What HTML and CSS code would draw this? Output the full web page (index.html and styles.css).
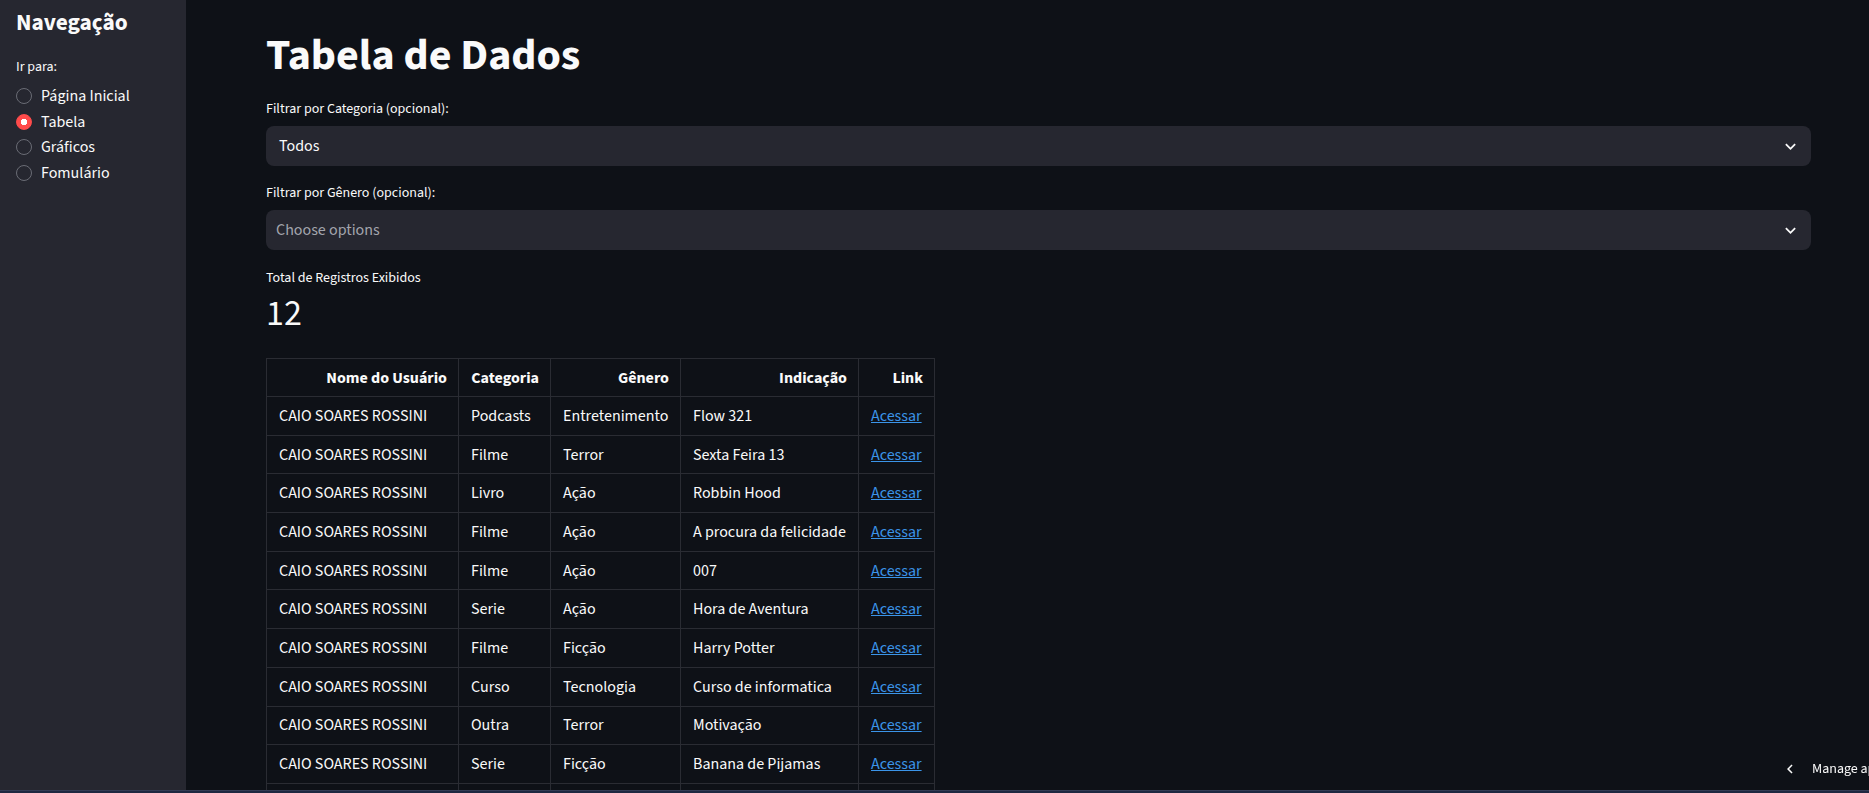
FILE: index.html
```html
<!DOCTYPE html>
<html lang="pt-BR">
<head>
<meta charset="utf-8">
<title>Tabela de Dados</title>
<link rel="stylesheet" href="styles.css">
</head>
<body>
<div class="app">
  <aside class="sidebar">
    <h2 class="side-title">Navegação</h2>
    <div class="side-label">Ir para:</div>
    <div class="radio-group">
      <label class="radio"><span class="dot"></span><span>Página Inicial</span></label>
      <label class="radio checked"><span class="dot"></span><span>Tabela</span></label>
      <label class="radio"><span class="dot"></span><span>Gráficos</span></label>
      <label class="radio"><span class="dot"></span><span>Fomulário</span></label>
    </div>
  </aside>
  <main class="main">
    <h1 class="title">Tabela de Dados</h1>

    <div class="field-label">Filtrar por Categoria (opcional):</div>
    <div class="select">
      <span class="select-value">Todos</span>
      <svg class="chev" viewBox="0 0 24 24" width="21" height="21"><path d="M16.59 8.59L12 13.17 7.41 8.59 6 10l6 6 6-6z" fill="#fafafa"/></svg>
    </div>

    <div class="field-label">Filtrar por Gênero (opcional):</div>
    <div class="select">
      <span class="select-placeholder">Choose options</span>
      <svg class="chev" viewBox="0 0 24 24" width="21" height="21"><path d="M16.59 8.59L12 13.17 7.41 8.59 6 10l6 6 6-6z" fill="#fafafa"/></svg>
    </div>

    <div class="metric">
      <div class="metric-label">Total de Registros Exibidos</div>
      <div class="metric-value">12</div>
    </div>

    <table class="data">
      <colgroup>
        <col class="c1"><col class="c2"><col class="c3"><col class="c4"><col class="c5">
      </colgroup>
      <thead>
        <tr><th>Nome do Usuário</th><th>Categoria</th><th>Gênero</th><th>Indicação</th><th>Link</th></tr>
      </thead>
      <tbody>
        <tr><td>CAIO SOARES ROSSINI</td><td>Podcasts</td><td>Entretenimento</td><td>Flow 321</td><td><a href="#">Acessar</a></td></tr>
        <tr><td>CAIO SOARES ROSSINI</td><td>Filme</td><td>Terror</td><td>Sexta Feira 13</td><td><a href="#">Acessar</a></td></tr>
        <tr><td>CAIO SOARES ROSSINI</td><td>Livro</td><td>Ação</td><td>Robbin Hood</td><td><a href="#">Acessar</a></td></tr>
        <tr><td>CAIO SOARES ROSSINI</td><td>Filme</td><td>Ação</td><td>A procura da felicidade</td><td><a href="#">Acessar</a></td></tr>
        <tr><td>CAIO SOARES ROSSINI</td><td>Filme</td><td>Ação</td><td>007</td><td><a href="#">Acessar</a></td></tr>
        <tr><td>CAIO SOARES ROSSINI</td><td>Serie</td><td>Ação</td><td>Hora de Aventura</td><td><a href="#">Acessar</a></td></tr>
        <tr><td>CAIO SOARES ROSSINI</td><td>Filme</td><td>Ficção</td><td>Harry Potter</td><td><a href="#">Acessar</a></td></tr>
        <tr><td>CAIO SOARES ROSSINI</td><td>Curso</td><td>Tecnologia</td><td>Curso de informatica</td><td><a href="#">Acessar</a></td></tr>
        <tr><td>CAIO SOARES ROSSINI</td><td>Outra</td><td>Terror</td><td>Motivação</td><td><a href="#">Acessar</a></td></tr>
        <tr><td>CAIO SOARES ROSSINI</td><td>Serie</td><td>Ficção</td><td>Banana de Pijamas</td><td><a href="#">Acessar</a></td></tr>
        <tr><td>CAIO SOARES ROSSINI</td><td>Livro</td><td>Ficção</td><td>Harry Potter</td><td><a href="#">Acessar</a></td></tr>
        <tr><td>CAIO SOARES ROSSINI</td><td>Filme</td><td>Terror</td><td>Invocação do Mal</td><td><a href="#">Acessar</a></td></tr>
      </tbody>
    </table>
  </main>
</div>
<div class="manage">
  <svg class="manage-chev" viewBox="0 0 24 24" width="18" height="18"><path d="M15.41 7.41L14 6l-6 6 6 6 1.41-1.41L10.83 12z" fill="#fafafa"/></svg>
  <span>Manage app</span>
</div>
<div class="bottom-bar"></div>
</body>
</html>
```
FILE: styles.css
```css
html, body {
  margin: 0;
  padding: 0;
  background: #0e1117;
  color: #fafafa;
  font-family: "Source Sans 3", "Source Sans Pro", Lato, "Noto Sans", sans-serif;
  overflow: hidden;
}
.app {
  display: flex;
  min-height: 100vh;
}
.sidebar {
  width: 186px;
  flex: none;
  background: #262730;
  padding: 7px 16px 0 16px;
  box-sizing: border-box;
  min-height: 100vh;
}
.side-title {
  margin: 0;
  font-size: 23.3px;
  line-height: 32px;
  font-weight: 700;
}
.side-label {
  margin-top: 18px;
  font-size: 14px;
  line-height: 20px;
}
.radio-group {
  margin-top: 6px;
  display: flex;
  flex-direction: column;
}
.radio {
  display: flex;
  align-items: center;
  gap: 9px;
  height: 25.7px;
  font-size: 16px;
}
.dot {
  width: 16px;
  height: 16px;
  border-radius: 50%;
  border: 1px solid #6a6c75;
  box-sizing: border-box;
  flex: none;
}
.radio.checked .dot {
  border-color: #ff4b4b;
  background: radial-gradient(circle, #ffffff 0 3px, #ff4b4b 3.5px);
}
.main {
  flex: 1;
  padding: 30px 58px 0 80px;
  min-width: 0;
}
.title {
  margin: 0;
  font-size: 44px;
  line-height: 52px;
  font-weight: 700;
}
.field-label {
  margin-top: 17px;
  font-size: 14px;
  line-height: 20px;
  margin-bottom: 7px;
}
.select + .field-label {
  margin-top: 17px;
}
.select {
  height: 40px;
  background: #262730;
  border-radius: 8px;
  display: flex;
  align-items: center;
  justify-content: space-between;
  padding: 0 10px 0 13px;
  font-size: 16px;
}
.select-placeholder {
  color: #a3a5ad;
  margin-left: -3px;
}
.chev {
  display: block;
}
.metric {
  margin-top: 18px;
}
.metric-label {
  font-size: 14px;
  line-height: 20px;
}
.metric-value {
  margin-top: 4px;
  font-size: 36px;
  line-height: 44px;
}
.data {
  margin-top: 22px;
  border-collapse: collapse;
  table-layout: fixed;
  width: 668px;
  font-size: 16px;
}
.c1 { width: 192px; }
.c2 { width: 92px; }
.c3 { width: 130px; }
.c4 { width: 178px; }
.c5 { width: 76px; }
.data th, .data td {
  border: 1px solid #2a2c33;
  padding: 0 11px 0 12px;
  white-space: nowrap;
}
.data th {
  height: 37px;
  text-align: right;
  font-weight: 700;
}
.data td {
  height: 37.7px;
  text-align: left;
}
.data a {
  color: #3b94e8;
  text-decoration: underline;
}
.manage {
  position: fixed;
  bottom: 13px;
  left: calc(100% - 88px);
  display: flex;
  align-items: center;
  gap: 13px;
  font-size: 14px;
  font-weight: 400;
  white-space: nowrap;
  height: 22px;
}
.bottom-bar {
  position: fixed;
  left: 0;
  right: 0;
  bottom: 0;
  height: 3px;
  background: #1f2841;
  border-top: 1px solid #343c55;
  box-sizing: border-box;
}
```
